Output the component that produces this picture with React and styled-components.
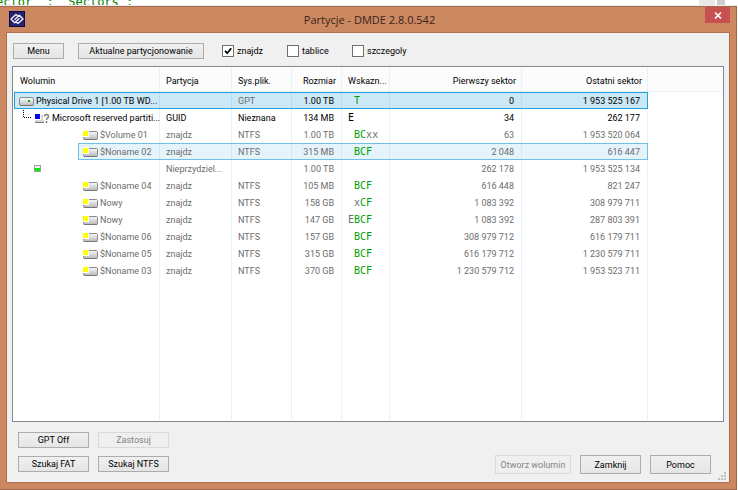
import { useState } from 'react';
import styled, { createGlobalStyle, css } from 'styled-components';

const GlobalStyle = createGlobalStyle`
  * {
    box-sizing: border-box;
  }

  body {
    margin: 0;
    background: #fff;
    font-family: Roboto, 'Noto Sans', sans-serif;
    font-size: 9px;
    line-height: 12px;
    color: #000;
  }

  button, input {
    font: inherit;
    color: inherit;
  }
`;

const Page = styled.div`
  display: flex;
  flex-direction: column;
  min-height: 100vh;
  padding-right: 1px;
`;

// what shows of the editor behind the dialog
const Behind = styled.div`
  display: flex;
  justify-content: space-between;
  align-items: flex-end;
  height: 6px;
  overflow: hidden;
  border-bottom: 1px solid #ececec;
`;

const CodeLine = styled.pre`
  margin: 0;
  text-indent: -4px;
  font-family: 'DejaVu Sans Mono', monospace;
  font-size: 12px;
  line-height: 6px;
  color: #008000;
`;

const Scroller = styled.div`
  display: flex;
  gap: 2px;
  width: 38px;
  height: 6px;

  &::before {
    content: '';
    width: 16px;
    background: #e9e9e9;
  }

  &::after {
    content: '';
    width: 8px;
    background: #cdcdcd;
  }
`;

const Window = styled.main`
  flex: 1;
  display: flex;
  flex-direction: column;
  padding: 0 6px 6px 6px;
  background: #cc8860;
  border: 1px solid #a5694a;
  border-left: none;
`;

const TitleBar = styled.header`
  display: grid;
  grid-template-columns: 1fr auto 1fr;
  align-items: start;
  height: 25px;
  padding-left: 3px;
`;

const Logo = styled.svg`
  width: 16px;
  height: 16px;
  margin-top: 4px;
`;

const Title = styled.h1`
  margin: 5px 0 0;
  font-family: 'Open Sans', 'Noto Sans', sans-serif;
  font-size: 11px;
  line-height: 16px;
  font-weight: 400;
  color: #38241a;
`;

const CloseButton = styled.button`
  display: flex;
  align-items: center;
  justify-content: center;
  justify-self: end;
  width: 25px;
  height: 16px;
  padding: 0;
  border: none;
  background: #c75050;
`;

const Client = styled.div`
  flex: 1;
  display: flex;
  flex-direction: column;
  background: #f0f0f0;
  border: 1px solid #ae704f;
`;

const Toolbar = styled.div`
  display: flex;
  align-items: center;
  gap: 14px;
  padding: 10px 6px 7px;
`;

const Button = styled.button`
  height: ${(p) => (p.$tall ? 19 : 16)}px;
  width: ${(p) => p.$width}px;
  padding: 0;
  border: 1px solid #acacac;
  background: linear-gradient(#f0f0f0, #e5e5e5);
  line-height: 12px;
  white-space: nowrap;

  &:disabled {
    border-color: #d9d9d9;
    background: #efefef;
    color: #838383;
  }
`;

const Checks = styled.div`
  display: grid;
  grid-template-columns: repeat(3, 65px);
  padding-left: 4px;
`;

const Check = styled.label`
  display: flex;
  align-items: center;
  gap: 3px;
`;

const CheckInput = styled.input`
  appearance: none;
  width: 12px;
  height: 12px;
  margin: 0;
  border: 1px solid #707070;
  background: #fff;

  &:checked {
    background: #fff url("data:image/svg+xml,%3Csvg xmlns='http://www.w3.org/2000/svg' viewBox='0 0 10 10'%3E%3Cpath d='M2 4.8 4.2 7.2 8.2 2.2' fill='none' stroke='%23000' stroke-width='1.8'/%3E%3C/svg%3E");
  }
`;

const List = styled.div`
  flex: 1;
  display: flex;
  margin: 0 5px;
  padding: 1px;
  background: #fff;
  border: 1px solid #828790;
`;

const Table = styled.table`
  flex: 1;
  width: 100%;
  table-layout: fixed;
  border-collapse: separate;
  border-spacing: 0;
`;

const HeadCell = styled.th`
  height: 24px;
  padding: 2px 6px 0;
  font-weight: 400;
  text-align: ${(p) => (p.$right ? 'right' : 'left')};
  white-space: nowrap;
  background: #fcfcfc;
  box-shadow: inset 0 -1px #e6f1fa, inset -1px 0 #e6f1fa;

  &:last-child {
    box-shadow: inset 0 -1px #e6f1fa;
  }
`;

const marks = {
  active: { line: '#26a0da', fill: '#cbe8f6', column: '#b8dcf2' },
  hot: { line: '#70c0e7', fill: '#e5f3fb', column: '#d3e8f7' },
};

const marked = css`
  ${({ $mark, $end }) =>
    $mark &&
    css`
      background: ${marks[$mark].fill};
      box-shadow: inset 0 1px ${marks[$mark].line}, inset 0 -1px ${marks[$mark].line},
        inset -1px 0 ${$end ? marks[$mark].line : marks[$mark].column};
    `}
`;

const Cell = styled.td`
  height: 17px;
  padding: 0 8px 0 6px;
  text-align: ${(p) => (p.$right ? 'right' : 'left')};
  white-space: nowrap;
  color: ${(p) => (p.$dim ? '#6d6d6d' : '#000')};
  box-shadow: inset -1px 0 #e6f1fa;
  ${marked}
`;

const NameCell = styled.td`
  height: 17px;
  padding: 0 0 0 ${(p) => p.$indent}px;
  color: ${(p) => (p.$dim ? '#6d6d6d' : '#000')};
  box-shadow: inset -1px 0 #e6f1fa;
`;

const Name = styled.div`
  display: flex;
  align-items: center;
  gap: 2px;
  height: 17px;
  padding-left: 5px;
  white-space: nowrap;
  ${marked}
  ${({ $mark }) =>
    $mark &&
    css`
      padding-left: 4px;
      border-left: 1px solid ${marks[$mark].line};
    `}

  svg {
    flex-shrink: 0;
  }
`;

const Flags = styled.span`
  font-family: 'DejaVu Sans Mono', monospace;
  font-size: 10px;
  white-space: pre;
`;

const Flag = styled.span`
  color: ${(p) => (p.$ok ? '#00a000' : 'inherit')};
`;

const Filler = styled.td`
  box-shadow: inset -1px 0 #e6f1fa;

  &:last-child {
    box-shadow: none;
  }
`;

const Footer = styled.footer`
  display: flex;
  justify-content: space-between;
  align-items: flex-end;
  padding: 10px 3px 2px 11px;
`;

const Tools = styled.div`
  display: grid;
  grid-template-columns: 71px 71px;
  gap: 8px 9px;
  padding-bottom: 8px;
`;

const Actions = styled.div`
  display: flex;
  align-items: flex-end;
  gap: 9px;
`;

const Grip = styled.svg`
  width: 8px;
  height: 8px;
  margin-left: -2px;
`;

const ActionButton = styled(Button)`
  margin-bottom: 6px;
`;

// row icons are as tall as the row, so they line up on whole pixels
function DiskIcon() {
  return (
    <svg width="15" height="17" viewBox="0 0 15 17">
      <defs>
        <linearGradient id="disk" x1="0" y1="0" x2="0" y2="1">
          <stop offset="0" stopColor="#fff" />
          <stop offset="1" stopColor="#bdbdbd" />
        </linearGradient>
      </defs>
      <rect x="0.5" y="5.5" width="14" height="8" rx="1.5" fill="url(#disk)" stroke="#8a8a8a" />
      <path d="M1 13.500h13" stroke="#777" />
      <path d="M9 8h2v2H9z" fill="#00b400" />
    </svg>
  );
}

function VolumeIcon() {
  return (
    <svg width="15" height="17" viewBox="0 0 15 17">
      <defs>
        <linearGradient id="volume" x1="0" y1="0" x2="0" y2="1">
          <stop offset="0" stopColor="#fafafa" />
          <stop offset="1" stopColor="#b8b8b8" />
        </linearGradient>
      </defs>
      <rect x="0.5" y="5.5" width="14" height="8" rx="1" fill="url(#volume)" stroke="#8a8a8a" />
      <path d="M1 13.500h13" stroke="#777" />
      <path d="M0 4h6v7H0z" fill="#fff" />
      <path d="M0 5h5v5H0z" fill="#ff0" />
    </svg>
  );
}

function ReservedIcon() {
  return (
    <svg width="31" height="17" viewBox="0 0 31 17">
      <path d="M4.5 1v7M5 8.5h7" fill="none" stroke="#000" strokeDasharray="1 1" />
      <path d="M16 6h10v7H16z" fill="#d6d6d6" />
      <path d="M16 13.500h10" stroke="#777" />
      <path d="M15 4h7v7h-7z" fill="#fff" />
      <path d="M16 5h5v5h-5z" fill="#00f" />
      <path d="M24 4h7v11h-6v-4h-1z" fill="#fff" />
      <path d="M25.500 7.500c0-2.600 4-2.600 4 0 0 1.800-2 1.600-2 3.500M27.500 12v2" fill="none" stroke="#808080" strokeWidth="1.500" />
    </svg>
  );
}

function FreeIcon() {
  return (
    <svg width="7" height="17" viewBox="0 0 7 17">
      <rect x="0.5" y="5.5" width="6" height="6" fill="#e4f5e4" stroke="#a0a0a0" />
      <path d="M1 8h5v3H1z" fill="#00f000" />
    </svg>
  );
}

const icons = { disk: DiskIcon, volume: VolumeIcon, reserved: ReservedIcon, free: FreeIcon };

const columns = [
  { label: 'Wolumin', width: 146 },
  { label: 'Partycja', width: 72 },
  { label: 'Sys.plik.', width: 60 },
  { label: 'Rozmiar', width: 50, right: true },
  { label: 'Wskazn...', width: 48 },
  { label: 'Pierwszy sektor', width: 132, right: true },
  { label: 'Ostatni sektor', width: 126, right: true },
];

const rows = [
  { icon: 'disk', indent: 0, name: 'Physical Drive 1 [1.00 TB WD...', part: '', fs: 'GPT', size: '1.00 TB', flags: ' T', first: '0', last: '1 953 525 167', mark: 'active' },
  { icon: 'reserved', indent: 0, name: 'Microsoft reserved partiti...', part: 'GUID', fs: 'Nieznana', size: '134 MB', flags: 'E', first: '34', last: '262 177' },
  { icon: 'volume', indent: 64, name: '$Volume 01', part: 'znajdz', fs: 'NTFS', size: '1.00 TB', flags: ' BCxx', first: '63', last: '1 953 520 064', dim: true },
  { icon: 'volume', indent: 64, name: '$Noname 02', part: 'znajdz', fs: 'NTFS', size: '315 MB', flags: ' BCF', first: '2 048', last: '616 447', dim: true, mark: 'hot' },
  { icon: 'free', indent: 15, name: '', part: 'Nieprzydziel...', fs: '', size: '1.00 TB', flags: '', first: '262 178', last: '1 953 525 134', dim: true },
  { icon: 'volume', indent: 64, name: '$Noname 04', part: 'znajdz', fs: 'NTFS', size: '105 MB', flags: ' BCF', first: '616 448', last: '821 247', dim: true },
  { icon: 'volume', indent: 64, name: 'Nowy', part: 'znajdz', fs: 'NTFS', size: '158 GB', flags: ' xCF', first: '1 083 392', last: '308 979 711', dim: true },
  { icon: 'volume', indent: 64, name: 'Nowy', part: 'znajdz', fs: 'NTFS', size: '147 GB', flags: 'EBCF', first: '1 083 392', last: '287 803 391', dim: true },
  { icon: 'volume', indent: 64, name: '$Noname 06', part: 'znajdz', fs: 'NTFS', size: '157 GB', flags: ' BCF', first: '308 979 712', last: '616 179 711', dim: true },
  { icon: 'volume', indent: 64, name: '$Noname 05', part: 'znajdz', fs: 'NTFS', size: '315 GB', flags: ' BCF', first: '616 179 712', last: '1 230 579 711', dim: true },
  { icon: 'volume', indent: 64, name: '$Noname 03', part: 'znajdz', fs: 'NTFS', size: '370 GB', flags: ' BCF', first: '1 230 579 712', last: '1 953 523 711', dim: true },
];

function PartitionRow({ row }) {
  const { icon, indent, name, part, fs, size, flags, first, last, dim, mark } = row;
  const Icon = icons[icon];

  return (
    <tr>
      <NameCell $indent={indent} $dim={dim}>
        <Name $mark={mark}>
          <Icon />
          <span>{name}</span>
        </Name>
      </NameCell>
      <Cell $dim={dim} $mark={mark}>{part}</Cell>
      <Cell $dim={dim || fs === 'GPT'} $mark={mark}>{fs}</Cell>
      <Cell $right $dim={dim} $mark={mark}>{size}</Cell>
      <Cell $dim={dim} $mark={mark}>
        <Flags>
          {flags.split('').map((f, i) => (
            <Flag key={i} $ok={'TBCF'.includes(f)}>{f}</Flag>
          ))}
        </Flags>
      </Cell>
      <Cell $right $dim={dim} $mark={mark}>{first}</Cell>
      <Cell $right $dim={dim} $mark={mark} $end>{last}</Cell>
      <td />
    </tr>
  );
}

function App() {
  const [options, setOptions] = useState({ znajdz: true, tablice: false, szczegoly: false });

  function toggle(key) {
    setOptions({ ...options, [key]: !options[key] });
  }

  return (
    <>
      <GlobalStyle />
      <Page>
        <Behind>
          <CodeLine>ector  :  Sectors :</CodeLine>
          <Scroller />
        </Behind>
        <Window>
          <TitleBar>
            <Logo viewBox="0 0 16 16">
              <rect width="16" height="16" fill="#0c0c48" />
              <rect x="1" y="1" width="14" height="14" fill="#24246e" />
              <g fill="none" stroke="#f0f0fa" strokeWidth="1.4" strokeLinejoin="round">
                <path d="M9 5 7 3.500 2 8l3.700 3.700L10.500 7.300" />
                <path d="M7 11l2 1.500L14 8l-3.700-3.700L5.500 8.700" />
              </g>
            </Logo>
            <Title>Partycje - DMDE 2.8.0.542</Title>
            <CloseButton aria-label="Zamknij okno">
              <svg width="8" height="7" viewBox="0 0 8 7">
                <path d="M1 .5l6 6M7 .5l-6 6" stroke="#fff" strokeWidth="1.6" />
              </svg>
            </CloseButton>
          </TitleBar>
          <Client>
            <Toolbar>
              <Button $width={51}>Menu</Button>
              <Button $width={126}>Aktualne partycjonowanie</Button>
              <Checks>
                {Object.keys(options).map((key) => (
                  <Check key={key}>
                    <CheckInput type="checkbox" checked={options[key]} onChange={() => toggle(key)} />
                    {key}
                  </Check>
                ))}
              </Checks>
            </Toolbar>
            <List>
              <Table>
                <colgroup>
                  {columns.map((c) => (
                    <col key={c.label} width={c.width} />
                  ))}
                  <col />
                </colgroup>
                <thead>
                  <tr>
                    {columns.map((c) => (
                      <HeadCell key={c.label} $right={c.right}>{c.label}</HeadCell>
                    ))}
                    <HeadCell as="td" />
                  </tr>
                </thead>
                <tbody>
                  {rows.map((row, i) => (
                    <PartitionRow key={i} row={row} />
                  ))}
                  <tr>
                    {columns.map((c) => (
                      <Filler key={c.label} />
                    ))}
                    <Filler />
                  </tr>
                </tbody>
              </Table>
            </List>
            <Footer>
              <Tools>
                <Button>GPT Off</Button>
                <Button disabled>Zastosuj</Button>
                <Button>Szukaj FAT</Button>
                <Button>Szukaj NTFS</Button>
              </Tools>
              <Actions>
                <ActionButton $tall $width={76} disabled>Otworz wolumin</ActionButton>
                <ActionButton $tall $width={61}>Zamknij</ActionButton>
                <ActionButton $tall $width={61}>Pomoc</ActionButton>
                <Grip viewBox="0 0 8 8">
                  <path d="M6 0h2v2H6zM3 3h2v2H3zM6 3h2v2H6zM0 6h2v2H0zM3 6h2v2H3zM6 6h2v2H6z" fill="#bfbfbf" />
                </Grip>
              </Actions>
            </Footer>
          </Client>
        </Window>
      </Page>
    </>
  );
}

export default App;
